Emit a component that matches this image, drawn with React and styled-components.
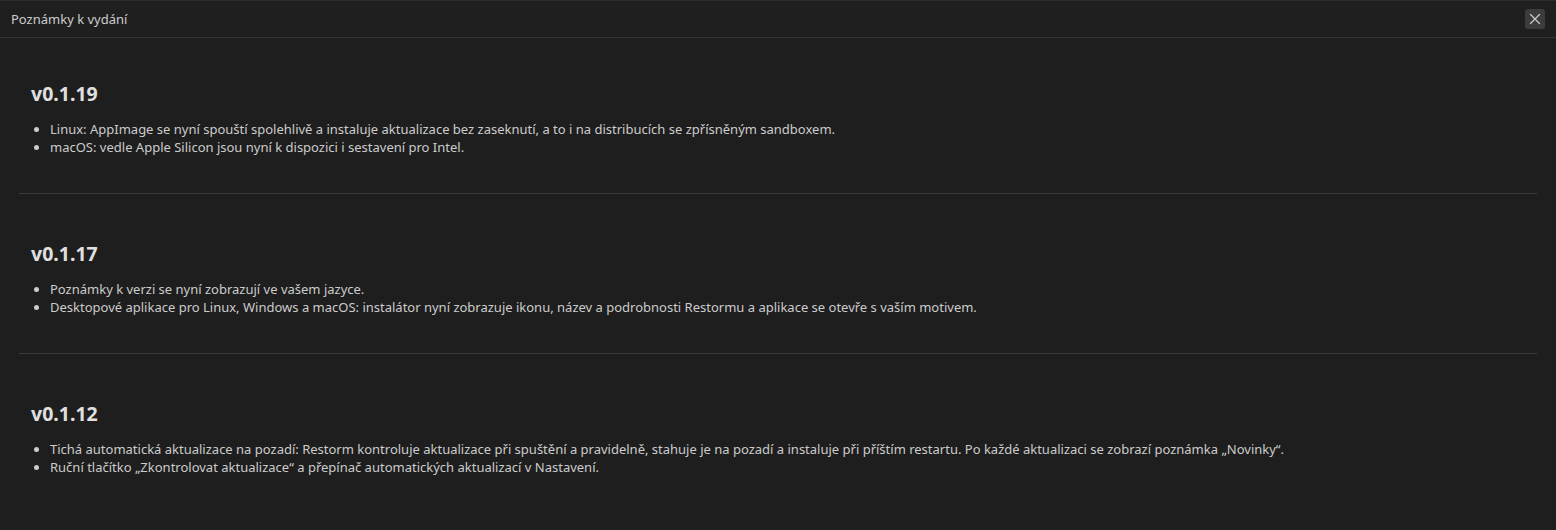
import React from "react";
import styled, { createGlobalStyle } from "styled-components";

const GlobalStyle = createGlobalStyle`
  html, body {
    margin: 0;
    padding: 0;
    background: #1e1e1e;
  }
  body {
    font-family: "Noto Sans", "Open Sans", sans-serif;
    color: #cccccc;
  }
`;

const Window = styled.div`
  height: 100vh;
  box-sizing: border-box;
  background: #1e1e1e;
  border-top: 1px solid #2b2b2b;
  display: flex;
  flex-direction: column;
`;

const TitleBar = styled.div`
  height: 36px;
  flex-shrink: 0;
  display: flex;
  align-items: center;
  justify-content: space-between;
  padding: 0 11px;
  background: #1f1f1f;
  border-bottom: 1px solid #333333;
`;

const Title = styled.span`
  font-size: 13px;
  color: #cccccc;
`;

const CloseButton = styled.button`
  width: 20px;
  height: 20px;
  padding: 0;
  border: none;
  border-radius: 3px;
  background: #3c3c3c;
  color: #cccccc;
  display: flex;
  align-items: center;
  justify-content: center;
  cursor: pointer;
`;

const Content = styled.div`
  flex: 1;
  overflow: hidden;
  padding: 0 19px;
`;

const Section = styled.section`
  padding: 24px 12px 37px;
  border-bottom: 1px solid #3a3a3a;

  &:first-child {
    padding-top: 20px;
  }
  &:last-child {
    border-bottom: none;
  }
`;

const Version = styled.h2`
  margin: 24px 0 14px;
  font-size: 19.5px;
  line-height: 24px;
  font-weight: 700;
  color: #e0e0e0;
`;

const Notes = styled.ul`
  margin: 0;
  padding-left: 19px;
  font-size: 13px;
  line-height: 18px;
  color: #cccccc;
`;

const releases = [
  {
    version: "v0.1.19",
    notes: [
      "Linux: AppImage se nyní spouští spolehlivě a instaluje aktualizace bez zaseknutí, a to i na distribucích se zpřísněným sandboxem.",
      "macOS: vedle Apple Silicon jsou nyní k dispozici i sestavení pro Intel.",
    ],
  },
  {
    version: "v0.1.17",
    notes: [
      "Poznámky k verzi se nyní zobrazují ve vašem jazyce.",
      "Desktopové aplikace pro Linux, Windows a macOS: instalátor nyní zobrazuje ikonu, název a podrobnosti Restormu a aplikace se otevře s vaším motivem.",
    ],
  },
  {
    version: "v0.1.12",
    notes: [
      "Tichá automatická aktualizace na pozadí: Restorm kontroluje aktualizace při spuštění a pravidelně, stahuje je na pozadí a instaluje při příštím restartu. Po každé aktualizaci se zobrazí poznámka „Novinky“.",
      "Ruční tlačítko „Zkontrolovat aktualizace“ a přepínač automatických aktualizací v Nastavení.",
    ],
  },
];

const CloseIcon = () => (
  <svg width="12" height="12" viewBox="0 0 12 12" fill="none">
    <path
      d="M1.5 1.5l9 9M10.5 1.5l-9 9"
      stroke="currentColor"
      strokeWidth="1.2"
      strokeLinecap="round"
    />
  </svg>
);

const App = () => {
  return (
    <>
      <GlobalStyle />
      <Window>
        <TitleBar>
          <Title>Poznámky k vydání</Title>
          <CloseButton aria-label="Zavřít">
            <CloseIcon />
          </CloseButton>
        </TitleBar>
        <Content>
          {releases.map((release) => (
            <Section key={release.version}>
              <Version>{release.version}</Version>
              <Notes>
                {release.notes.map((note) => (
                  <li key={note}>{note}</li>
                ))}
              </Notes>
            </Section>
          ))}
        </Content>
      </Window>
    </>
  );
};

export default App;
